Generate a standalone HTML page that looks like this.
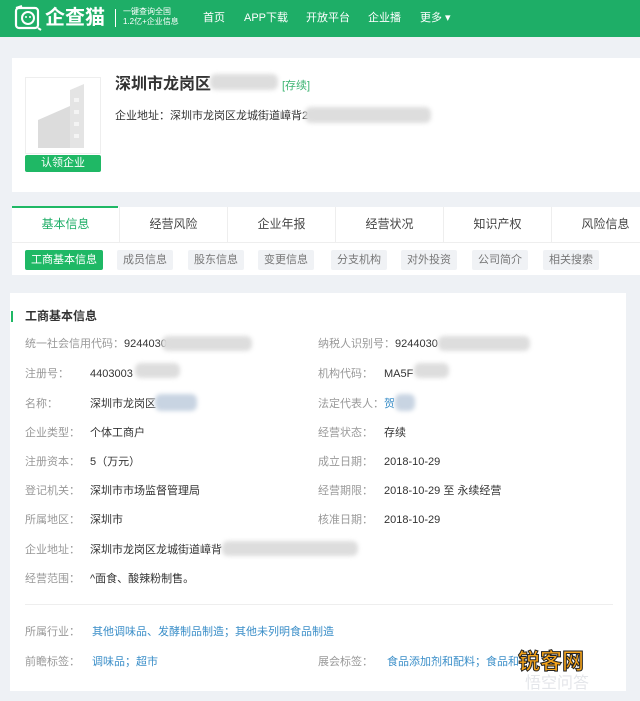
<!DOCTYPE html>
<html><head><meta charset="utf-8"><style>
*{margin:0;padding:0;box-sizing:border-box}
body{width:640px;height:701px;background:#eef1f5;font-family:"Liberation Sans","Noto Sans CJK SC",sans-serif;position:relative;overflow:hidden;font-size:11px;color:#333;line-height:16px}
.a{position:absolute;white-space:nowrap}
.hd{position:absolute;left:0;top:0;width:640px;height:37px;background:#1eae67}
.nav{color:#fff;font-size:11px;top:10px}
.blur{position:absolute;background:#ddd;border-radius:6px;filter:blur(2px)}
.lb{color:#999;font-size:11px}
.v{color:#333;font-size:11px}
.tab{position:absolute;top:207px;height:35px;width:108px;text-align:center;line-height:35px;font-size:12px;color:#444;border-right:1px solid #eee}
.st{position:absolute;top:250px;height:20px;line-height:20px;padding:0 6px;background:#f0f2f5;color:#777;font-size:11px;border-radius:2px}
.lk{color:#3a8ec8}
</style></head><body>
<div class="hd"></div>
<svg class="a" style="left:14px;top:5px" width="28" height="26" viewBox="0 0 28 26"><rect x="2" y="3" width="22" height="20" rx="3" fill="none" stroke="#fff" stroke-width="2.2"/><circle cx="14" cy="13" r="6" fill="none" stroke="#fff" stroke-width="2"/><circle cx="12" cy="12" r="1" fill="#fff"/><circle cx="16" cy="12" r="1" fill="#fff"/><path d="M2 3 L8 1 M24 23 L27 25" stroke="#fff" stroke-width="2"/></svg>
<div class="a" style="left:45px;top:5px;color:#fff;font-size:20px;font-weight:bold;line-height:26px">企查猫</div>
<div class="a" style="left:115px;top:9px;width:1px;height:18px;background:#fff"></div>
<div class="a" style="left:123px;top:7px;color:#fff;font-size:8px;line-height:10px">一键查询全国<br>1.2亿+企业信息</div>
<div class="a nav" style="left:203px">首页</div>
<div class="a nav" style="left:244px">APP下载</div>
<div class="a nav" style="left:306px">开放平台</div>
<div class="a nav" style="left:368px">企业播</div>
<div class="a nav" style="left:420px">更多 ▾</div>

<div class="a" style="left:12px;top:58px;width:628px;height:134px;background:#fff"></div>
<div class="a" style="left:25px;top:77px;width:76px;height:77px;border:1px solid #eee;background:#fff"></div>
<svg class="a" style="left:30px;top:80px" width="66" height="70" viewBox="0 0 66 70"><path d="M40 10 L54 4 L54 68 L40 68Z" fill="#e4e4e4"/><path d="M8 40 L40 26 L40 68 L8 68Z" fill="#dcdcdc"/><g fill="#f4f4f4"><rect x="44" y="18" width="5" height="4"/><rect x="44" y="30" width="5" height="4"/><rect x="44" y="42" width="5" height="4"/><rect x="44" y="54" width="5" height="4"/></g></svg>
<div class="a" style="left:25px;top:155px;width:76px;height:17px;background:#1fb865;color:#fff;font-size:11px;text-align:center;line-height:17px;border-radius:2px">认领企业</div>
<div class="a" style="left:115px;top:74px;font-size:16px;font-weight:bold;color:#333;line-height:22px">深圳市龙岗区</div>
<div class="blur" style="left:210px;top:74px;width:68px;height:16px"></div>
<div class="a" style="left:282px;top:78px;color:#3cb371;font-size:11px">[存续]</div>
<div class="a" style="left:115px;top:108px;font-size:11px">企业地址：深圳市龙岗区龙城街道嶂背2</div>
<div class="blur" style="left:305px;top:107px;width:126px;height:16px"></div>

<div class="a" style="left:12px;top:207px;width:628px;height:68px;background:#fff"></div>
<div class="a" style="left:12px;top:206px;width:106px;height:2px;background:#1fb865"></div>
<div class="tab" style="left:12px;color:#1fae67">基本信息</div>
<div class="tab" style="left:120px">经营风险</div>
<div class="tab" style="left:228px">企业年报</div>
<div class="tab" style="left:336px">经营状况</div>
<div class="tab" style="left:444px">知识产权</div>
<div class="tab" style="left:552px">风险信息</div>
<div class="a" style="left:12px;top:242px;width:628px;height:1px;background:#eee"></div>
<div class="st" style="left:25px;background:#1fb865;color:#fff">工商基本信息</div>
<div class="st" style="left:117px">成员信息</div>
<div class="st" style="left:188px">股东信息</div>
<div class="st" style="left:258px">变更信息</div>
<div class="st" style="left:331px">分支机构</div>
<div class="st" style="left:401px">对外投资</div>
<div class="st" style="left:472px">公司简介</div>
<div class="st" style="left:543px">相关搜索</div>

<div class="a" style="left:10px;top:293px;width:616px;height:398px;background:#fff"></div>
<div class="a" style="left:11px;top:311px;width:2px;height:11px;background:#1fb865"></div>
<div class="a" style="left:25px;top:308px;font-size:12px;font-weight:bold;color:#333">工商基本信息</div>

<div class="a lb" style="left:25px;top:336px">统一社会信用代码：<span class="v">9244030</span></div>
<div class="blur" style="left:162px;top:336px;width:90px;height:15px"></div>
<div class="a lb" style="left:318px;top:336px">纳税人识别号：<span class="v">9244030</span></div>
<div class="blur" style="left:438px;top:336px;width:92px;height:15px"></div>

<div class="a lb" style="left:25px;top:366px">注册号：</div><div class="a v" style="left:90px;top:366px">4403003</div>
<div class="blur" style="left:135px;top:363px;width:45px;height:15px"></div>
<div class="a lb" style="left:318px;top:366px">机构代码：</div><div class="a v" style="left:384px;top:366px">MA5F</div>
<div class="blur" style="left:414px;top:363px;width:35px;height:15px"></div>

<div class="a lb" style="left:25px;top:396px">名称：</div><div class="a v" style="left:90px;top:396px">深圳市龙岗区</div>
<div class="blur" style="left:155px;top:394px;width:42px;height:17px;background:#c8d4e2"></div>
<div class="a lb" style="left:318px;top:396px">法定代表人：<span class="lk">贺</span></div>
<div class="blur" style="left:395px;top:394px;width:20px;height:17px;background:#c8d4e2"></div>

<div class="a lb" style="left:25px;top:425px">企业类型：</div><div class="a v" style="left:90px;top:425px">个体工商户</div>
<div class="a lb" style="left:318px;top:425px">经营状态：</div><div class="a v" style="left:384px;top:425px">存续</div>

<div class="a lb" style="left:25px;top:454px">注册资本：</div><div class="a v" style="left:90px;top:454px">5（万元）</div>
<div class="a lb" style="left:318px;top:454px">成立日期：</div><div class="a v" style="left:384px;top:454px">2018-10-29</div>

<div class="a lb" style="left:25px;top:483px">登记机关：</div><div class="a v" style="left:90px;top:483px">深圳市市场监督管理局</div>
<div class="a lb" style="left:318px;top:483px">经营期限：</div><div class="a v" style="left:384px;top:483px">2018-10-29 至 永续经营</div>

<div class="a lb" style="left:25px;top:512px">所属地区：</div><div class="a v" style="left:90px;top:512px">深圳市</div>
<div class="a lb" style="left:318px;top:512px">核准日期：</div><div class="a v" style="left:384px;top:512px">2018-10-29</div>

<div class="a lb" style="left:25px;top:542px">企业地址：</div><div class="a v" style="left:90px;top:542px">深圳市龙岗区龙城街道嶂背</div>
<div class="blur" style="left:222px;top:541px;width:136px;height:15px"></div>

<div class="a lb" style="left:25px;top:571px">经营范围：</div><div class="a v" style="left:90px;top:571px">^面食、酸辣粉制售。</div>

<div class="a" style="left:25px;top:604px;width:588px;height:1px;background:#eee"></div>
<div class="a lb" style="left:25px;top:624px">所属行业：</div><div class="a lk" style="left:92px;top:624px">其他调味品、发酵制品制造；其他未列明食品制造</div>
<div class="a lb" style="left:25px;top:654px">前瞻标签：</div><div class="a lk" style="left:92px;top:654px">调味品；超市</div>
<div class="a lb" style="left:318px;top:654px">展会标签：</div><div class="a lk" style="left:387px;top:654px">食品添加剂和配料；食品和</div>
<div class="a" style="left:525px;top:674px;font-size:16px;color:#e4e6ea;line-height:20px">悟空问答</div>
<div class="a" style="left:518px;top:648px;font-size:22px;font-weight:bold;color:#f5a31a;-webkit-text-stroke:1px #222;line-height:28px">锐客网</div>
</body></html>
